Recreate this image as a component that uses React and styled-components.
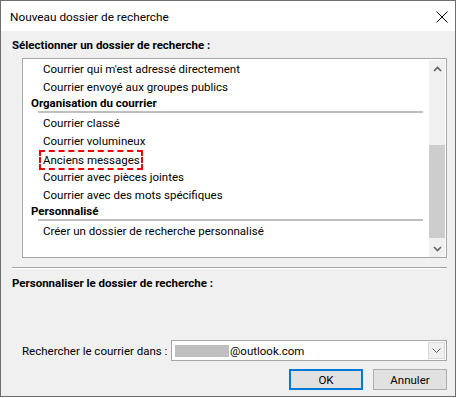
import React from 'react';
import styled, { createGlobalStyle } from 'styled-components';

const GlobalStyle = createGlobalStyle`
  body {
    margin: 0;
    background: #ffffff;
    font-family: Roboto, 'Segoe UI', sans-serif;
    font-size: 11.5px;
    color: #000;
  }
`;

const groups = [
  {
    title: null,
    items: ["Courrier qui m'est adressé directement", 'Courrier envoyé aux groupes publics'],
  },
  {
    title: 'Organisation du courrier',
    items: ['Courrier classé', 'Courrier volumineux', 'Anciens messages', 'Courrier avec pièces jointes', 'Courrier avec des mots spécifiques'],
  },
  {
    title: 'Personnalisé',
    items: ['Créer un dossier de recherche personnalisé'],
  },
];

const App = () => {
  return (<>
    <GlobalStyle />
    <Window>
      <TitleBar>
        <Title>Nouveau dossier de recherche</Title>
        <CloseButton>
          <svg width="12" height="12" viewBox="0 0 12 12">
            <path d="M0.5 0.5 L11.5 11.5 M11.5 0.5 L0.5 11.5" stroke="#000" strokeWidth="1" />
          </svg>
        </CloseButton>
      </TitleBar>
      <Body>
        <SectionLabel $top={6}>Sélectionner un dossier de recherche :</SectionLabel>
        <ListBox>
          <ListContent>
            {groups.map((g, i) => (
              <div key={i}>
                {g.title && <GroupHeader>{g.title}</GroupHeader>}
                {g.items.map((item) => (
                  <Item key={item}>
                    {item === 'Anciens messages' ? <Focused>{item}</Focused> : item}
                  </Item>
                ))}
              </div>
            ))}
          </ListContent>
          <ScrollBar>
            <ScrollArrow>
              <svg width="9" height="6" viewBox="0 0 9 6">
                <path d="M1 5 L4.5 1.5 L8 5" fill="none" stroke="#606060" strokeWidth="1.6" />
              </svg>
            </ScrollArrow>
            <Track>
              <Thumb />
            </Track>
            <ScrollArrow>
              <svg width="9" height="6" viewBox="0 0 9 6">
                <path d="M1 1 L4.5 4.5 L8 1" fill="none" stroke="#606060" strokeWidth="1.6" />
              </svg>
            </ScrollArrow>
          </ScrollBar>
        </ListBox>
        <Separator />
        <SectionLabel $top={6}>Personnaliser le dossier de recherche :</SectionLabel>
        <ComboRow>
          <ComboLabel>Rechercher le courrier dans :</ComboLabel>
          <Combo>
            <ComboValue>
              <Redacted />
              @outlook.com
            </ComboValue>
            <DropButton>
              <svg width="9" height="5" viewBox="0 0 9 5">
                <path d="M0.5 0.5 L4.5 4.5 L8.5 0.5" fill="none" stroke="#606060" strokeWidth="1" />
              </svg>
            </DropButton>
          </Combo>
        </ComboRow>
        <ButtonRow>
          <Button $primary>OK</Button>
          <Button>Annuler</Button>
        </ButtonRow>
      </Body>
    </Window>
  </>);
};

const Window = styled.div`
  width: 456px;
  height: 397px;
  box-sizing: border-box;
  border: 1px solid #6e6e6e;
  background: #f0f0f0;
  display: flex;
  flex-direction: column;
  overflow: hidden;
`;

const TitleBar = styled.div`
  flex-shrink: 0;
  height: 30px;
  background: #ffffff;
  display: flex;
  align-items: center;
  justify-content: space-between;
  padding: 0 6px 0 9px;
`;

const Title = styled.div`
  font-size: 11.8px;
  line-height: 16px;
  margin-top: 1px;
`;

const CloseButton = styled.div`
  width: 12px;
  height: 12px;
  margin-right: 1px;
  margin-top: 1px;
  display: flex;
`;

const Body = styled.div`
  flex: 1;
  display: flex;
  flex-direction: column;
  padding: 0 8px 0 11px;
  & > * {
    flex-shrink: 0;
  }
`;

const SectionLabel = styled.div`
  font-weight: bold;
  line-height: 16px;
  white-space: nowrap;
  margin-top: ${(p) => p.$top}px;
`;

const ListBox = styled.div`
  margin: 5px 0 0 10px;
  height: 200px;
  box-sizing: border-box;
  border: 1px solid #a6a6a6;
  background: #ffffff;
  display: flex;
  overflow: hidden;
`;

const ListContent = styled.div`
  flex: 1;
  padding: 1px 6px 0 0;
`;

const GroupHeader = styled.div`
  font-weight: bold;
  line-height: 15px;
  padding-left: 8px;
  &::after {
    content: '';
    display: block;
    height: 2px;
    background: #bfbfbf;
    margin: 0 0 1px 7px;
  }
`;

const Item = styled.div`
  height: 18px;
  line-height: 18px;
  padding-left: 20px;
  white-space: nowrap;
`;

const Focused = styled.span`
  display: inline-block;
  width: 104px;
  box-sizing: border-box;
  line-height: 16px;
  margin-left: -4px;
  padding-left: 2px;
  border: 2px dashed #f00000;
  white-space: nowrap;
`;

const ScrollBar = styled.div`
  width: 16px;
  margin: 1px 1px 0 0;
  background: #f0f0f0;
  display: flex;
  flex-direction: column;
`;

const ScrollArrow = styled.div`
  height: 17px;
  display: flex;
  align-items: center;
  justify-content: center;
`;

const Track = styled.div`
  flex: 1;
  padding-top: 68px;
`;

const Thumb = styled.div`
  height: 93px;
  background: #cdcdcd;
`;

const Separator = styled.div`
  margin-top: 9px;
  border-top: 1px solid #a0a0a0;
  border-bottom: 1px solid #ffffff;
`;

const ComboRow = styled.div`
  margin: 49px 0 0 10px;
  display: flex;
  align-items: center;
  justify-content: space-between;
`;

const ComboLabel = styled.div`
  line-height: 16px;
  white-space: nowrap;
`;

const Combo = styled.div`
  width: 276px;
  height: 21px;
  box-sizing: border-box;
  border: 1px solid #a6a6a6;
  background: #ffffff;
  display: flex;
`;

const ComboValue = styled.div`
  flex: 1;
  display: flex;
  align-items: center;
  padding-left: 3px;
`;

const Redacted = styled.span`
  width: 54px;
  height: 12px;
  background: #bfbfbf;
  margin-right: 1px;
`;

const DropButton = styled.div`
  width: 17px;
  margin: 1px;
  border: 1px solid #d9d9d9;
  box-sizing: border-box;
  background: #f0f0f0;
  display: flex;
  align-items: center;
  justify-content: center;
`;

const ButtonRow = styled.div`
  margin-top: 8px;
  display: flex;
  justify-content: flex-end;
  gap: 10px;
`;

const Button = styled.div`
  width: 74px;
  height: 21px;
  box-sizing: border-box;
  border: ${(p) => (p.$primary ? '2px solid #0078d7' : '1px solid #adadad')};
  background: #e1e1e1;
  display: flex;
  align-items: center;
  justify-content: center;
`;

export default App;
